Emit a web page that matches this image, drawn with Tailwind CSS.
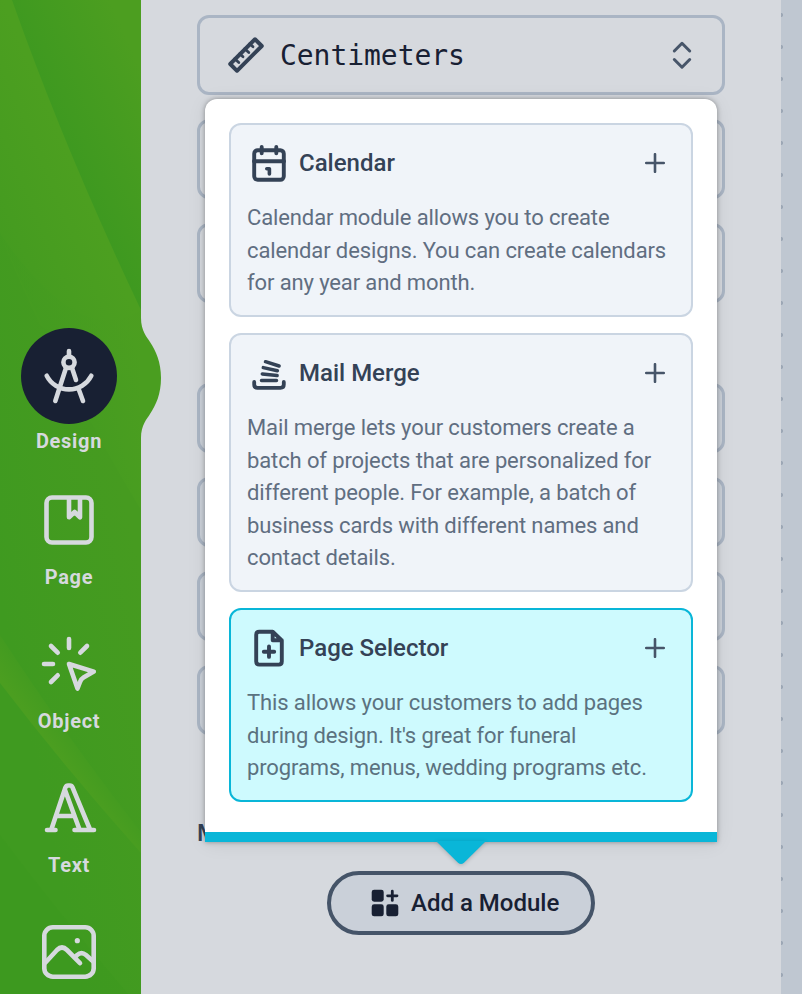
<!DOCTYPE html>
<html lang="en">
<head>
<meta charset="utf-8">
<title>Design</title>
<script src="https://cdn.jsdelivr.net/npm/@tailwindcss/browser@4"></script>
</head>
<body class="font-['Roboto',sans-serif]">
<div class="relative flex h-[994px] w-[802px] overflow-hidden bg-[#d6d9de]">

  <!-- Sidebar -->
  <nav class="relative h-full w-[141px] shrink-0 bg-[#429b20] text-[#d6d9de]">
    <svg class="absolute inset-0" width="141" height="994" viewBox="0 0 141 994">
      <defs>
        <linearGradient id="a" gradientUnits="userSpaceOnUse" x1="50" y1="110" x2="141" y2="70"><stop stop-color="#3e9920"/><stop offset="1" stop-color="#4c9e20"/></linearGradient>
        <linearGradient id="b" gradientUnits="userSpaceOnUse" x1="75" y1="170" x2="-20" y2="210"><stop stop-color="#4c9f20"/><stop offset="1" stop-color="#449b20"/></linearGradient>
        <linearGradient id="c" gradientUnits="userSpaceOnUse" x1="0" y1="400" x2="141" y2="370"><stop stop-color="#3e9920"/><stop offset="1" stop-color="#4b9e20"/></linearGradient>
        <linearGradient id="d" gradientUnits="userSpaceOnUse" x1="0" y1="600" x2="141" y2="570"><stop stop-color="#3f9a20"/><stop offset="1" stop-color="#469b20"/></linearGradient>
        <linearGradient id="e" gradientUnits="userSpaceOnUse" x1="78" y1="740" x2="58" y2="755"><stop stop-color="#439b20"/><stop offset="1" stop-color="#4b9e20"/></linearGradient>
      </defs>
      <rect width="141" height="994" fill="url(#d)"/>
      <path d="M0 233Q65 385 141 510V0H0Z" fill="url(#c)"/>
      <path d="M0 0H141V400Q100 365 40 325Q18 280 0 233Z" fill="url(#b)"/>
      <path d="M12 0Q65 150 141 310V0Z" fill="url(#a)"/>
      <path d="M0 233Q40 330 141 510V310Q80 350 0 233Z" fill="url(#c)" opacity=".5"/>
      <path d="M0 635Q65 735 141 832V853Q65 768 0 683Z" fill="url(#e)"/>
      <path d="M0 835Q60 915 128 994H0Z" fill="#3c981f" opacity=".4"/>
    </svg>
    <svg class="absolute left-[140px] top-[318px]" width="22" height="120" viewBox="-1 0 22 120" fill="#4a9e20"><path d="M-1 0H0C0 13 6 19 9 24C15 33 20 44 20 60S15 87 9 96C6 101 0 107 0 120H-1Z"/></svg>

    <div class="relative flex w-[138px] flex-col items-center pt-[328px] text-xl leading-6 font-bold tracking-[0.7px]">
      <div class="flex h-[144px] flex-col items-center">
        <div class="flex size-24 items-center justify-center rounded-full bg-[#182033]">
          <svg width="64" height="64" fill="none" stroke="currentColor" stroke-width="4.6" stroke-linecap="round"><path d="M32 7V12M28.8 24.5 18.3 57M35.2 24.5 39 36M42 46 46 57M9.7 31.7A25 25 0 0 0 54.3 31.7"/><circle cx="32" cy="18.3" r="5.6"/></svg>
        </div>
        <span class="mt-[5px]">Design</span>
      </div>
      <div class="flex h-[144px] flex-col items-center pt-4">
        <svg width="64" height="64" fill="none" stroke="currentColor" stroke-width="4.6" stroke-linejoin="round"><rect x="9.5" y="9.5" width="45" height="45" rx="5.5"/><path d="M32 10V29.3L37.6 24 43 29.3V10"/></svg>
        <span class="mt-[13px]">Page</span>
      </div>
      <div class="flex h-[144px] flex-col items-center pt-4">
        <svg width="64" height="64" fill="none" stroke="currentColor" stroke-width="4.6" stroke-linecap="round" stroke-linejoin="round"><path d="M32 7V16M14 14 20.7 20.7M50 14 43.3 20.7M7 32H16M14 50 20.7 43.3M32 32 56.8 39.6 46.5 45.5Q44 47 43 50L40.5 56.5Z"/></svg>
        <span class="mt-[13px]">Object</span>
      </div>
      <div class="flex h-[144px] flex-col items-center pt-4">
        <svg width="64" height="64" fill="none" stroke="currentColor" stroke-width="4.6" stroke-linecap="round" stroke-linejoin="round"><path d="M10 54H18.5M37.5 54H57M14.5 53 28.4 11.5Q29.2 9.5 31 9.5H33Q34.7 9.5 35.4 11.2L53 53.5M28 14 42.5 53.5M20 40H37"/></svg>
        <span class="mt-[13px]">Text</span>
      </div>
      <div class="flex flex-col items-center pt-4">
        <svg width="64" height="64" fill="none" stroke="currentColor" stroke-width="4.6" stroke-linecap="round"><rect x="7.3" y="7.3" width="49.4" height="49.4" rx="8.5"/><path d="M8.5 42.5 20 30Q25 25 30 30L43 43.2M38.5 36.8 40 35.2Q44.3 31 49 35L56.5 41.8"/><circle cx="40.3" cy="20.7" r="2.6" fill="currentColor" stroke="none"/></svg>
      </div>
    </div>
  </nav>

  <!-- Settings panel -->
  <main class="flex h-full w-[640px] shrink-0 flex-col px-14 pt-[15px]">
    <div class="flex flex-col gap-6">
      <div class="flex h-20 items-center rounded-xl border-3 border-[#aab5c4] pl-[26px] pr-[22px] text-[#344256]">
        <svg width="40" height="40" fill="none" stroke="currentColor" stroke-width="3.9" stroke-linejoin="round"><path d="M29 4.2 35.8 11 11 35.8 4.2 29Z"/><path d="M8.7 23.7 12.8 27.6M13.7 18.7 17 21.8M18.7 13.7 22.8 17.6M23.7 8.7 27 11.8" stroke-width="2.8" stroke-linecap="round"/></svg>
        <span class="ml-[14px] pt-[2px] font-['DejaVu_Sans_Mono',monospace] text-[28px] tracking-[-0.05px] text-[#182033]">Centimeters</span>
        <svg class="ml-auto" width="36" height="36" fill="none" stroke="#475569" stroke-width="3" stroke-linecap="round" stroke-linejoin="round"><path d="M10.3 14 18 6.3 25.7 14M10.3 22.5 18 30.2 25.7 22.5"/></svg>
      </div>
      <div class="h-20 rounded-xl border-3 border-[#aab5c4]"></div>
      <div class="h-20 rounded-xl border-3 border-[#aab5c4]"></div>
    </div>
    <div class="mt-20 flex flex-col gap-6">
      <div class="h-[70px] rounded-xl border-3 border-[#aab5c4] bg-[#cbd1d9]"></div>
      <div class="h-[70px] rounded-xl border-3 border-[#aab5c4] bg-[#cbd1d9]"></div>
      <div class="h-[70px] rounded-xl border-3 border-[#aab5c4] bg-[#cbd1d9]"></div>
      <div class="h-[70px] rounded-xl border-3 border-[#aab5c4] bg-[#cbd1d9]"></div>
    </div>
    <h2 class="mt-[82px] h-8 text-2xl font-medium text-[#344256]">Modules</h2>
    <button class="mt-[22px] flex h-16 w-[268px] shrink-0 items-center self-center rounded-full border-4 border-[#455468] bg-[#cad0d9] pl-[38px] text-2xl font-medium text-[#182033]">
      <svg class="mr-[10px]" width="32" height="32" fill="currentColor"><rect x="2.7" y="2.7" width="12" height="12" rx="2.4"/><rect x="2.7" y="17.3" width="12" height="12" rx="2.4"/><rect x="17.3" y="17.3" width="12" height="12" rx="2.4"/><path d="M23.3 4.2V13.4M18.6 8.8H28" stroke="currentColor" stroke-width="2.8" stroke-linecap="round"/></svg>
      Add a Module
    </button>
  </main>

  <!-- Canvas edge with grid dots -->
  <aside class="h-full w-[21px] bg-[#bfc7d1] bg-[radial-gradient(circle_at_0px_15px,#9ca7b5_1.8px,transparent_2.4px)] bg-[size:32px_32px]"></aside>

  <!-- Module picker -->
  <section class="absolute left-[205px] top-[99px] w-[512px]">
    <div class="relative flex h-[743px] flex-col gap-4 rounded-t-xl border-b-10 border-[#09b6d8] bg-white p-6 text-[#344256] shadow-[0_0_5px_rgba(0,0,0,.35),0_2px_20px_rgba(0,0,0,.07)]">
      <article class="h-[194px] rounded-xl border-2 border-[#cad5e2] bg-[#f0f4f9] p-4">
        <div class="flex h-[44px] items-center pl-[2px]">
          <svg width="40" height="40" fill="none" stroke="currentColor" stroke-width="3.9" stroke-linecap="round" stroke-linejoin="round"><rect x="5.2" y="7.2" width="29.6" height="29.6" rx="3.5"/><path d="M5 18.3H35M12.7 3.9V10.3M27.3 3.9V10.3"/><path d="M17.8 25.7H20.4V31" stroke-width="3.6"/></svg>
          <h3 class="ml-[10px] text-2xl font-medium">Calendar</h3>
          <svg class="ml-auto mr-[10px]" width="20" height="20" stroke="#475569" stroke-width="2.6" stroke-linecap="round"><path d="M10 1.2V18.8M1.2 10H18.8"/></svg>
        </div>
        <p class="mt-[17px] text-[22px] leading-[32.5px] tracking-[-0.12px] whitespace-nowrap text-[#606e81]">Calendar module allows you to create<br>calendar designs. You can create calendars<br>for any year and month.</p>
      </article>
      <article class="h-[259px] rounded-xl border-2 border-[#cad5e2] bg-[#f0f4f9] p-4">
        <div class="flex h-[44px] items-center pl-[2px]">
          <svg width="40" height="40" fill="none" stroke="currentColor" stroke-width="3.8" stroke-linecap="round" stroke-linejoin="round"><path d="M5.2 29V31.5Q5.2 34.8 8.5 34.8H31.5Q34.8 34.8 34.8 31.5V29"/><path d="M12.5 27.4H27.5M13.3 21 28.1 22.5M14.3 14.6 28.4 17.7M16.5 8.7 30.1 13" stroke-width="3.5"/></svg>
          <h3 class="ml-[10px] text-2xl font-medium">Mail Merge</h3>
          <svg class="ml-auto mr-[10px]" width="20" height="20" stroke="#475569" stroke-width="2.6" stroke-linecap="round"><path d="M10 1.2V18.8M1.2 10H18.8"/></svg>
        </div>
        <p class="mt-[17px] text-[22px] leading-[32.5px] tracking-[-0.12px] whitespace-nowrap text-[#606e81]">Mail merge lets your customers create a<br>batch of projects that are personalized for<br>different people. For example, a batch of<br>business cards with different names and<br>contact details.</p>
      </article>
      <article class="h-[194px] rounded-xl border-2 border-[#09b6d8] bg-[#cefafe] p-4">
        <div class="flex h-[44px] items-center pl-[2px]">
          <svg width="40" height="40" fill="none" stroke="currentColor" stroke-width="3.9" stroke-linecap="round" stroke-linejoin="round"><path d="M23.7 3.7H10.3Q7.2 3.7 7.2 6.7V33.6Q7.2 36.6 10.3 36.6H29.8Q32.8 36.6 32.8 33.6V12.5ZM23.7 3.7V12.2H32.8M20 18.5V28.9M14.8 23.7H25.2"/></svg>
          <h3 class="ml-[10px] text-2xl font-medium">Page Selector</h3>
          <svg class="ml-auto mr-[10px]" width="20" height="20" stroke="#475569" stroke-width="2.6" stroke-linecap="round"><path d="M10 1.2V18.8M1.2 10H18.8"/></svg>
        </div>
        <p class="mt-[17px] text-[22px] leading-[32.5px] tracking-[-0.12px] whitespace-nowrap text-[#5b7280]">This allows your customers to add pages<br>during design. It's great for funeral<br>programs, menus, wedding programs etc.</p>
      </article>
    </div>
    <svg class="absolute left-[231px] top-[742px] drop-shadow-[0_1px_2px_rgba(0,0,0,.2)]" width="50" height="24" viewBox="0 0 50 24" fill="#09b6d8"><path d="M0 0H50L28 21.8Q25 24.2 22 21.8Z"/></svg>
  </section>
</div>
</body>
</html>
